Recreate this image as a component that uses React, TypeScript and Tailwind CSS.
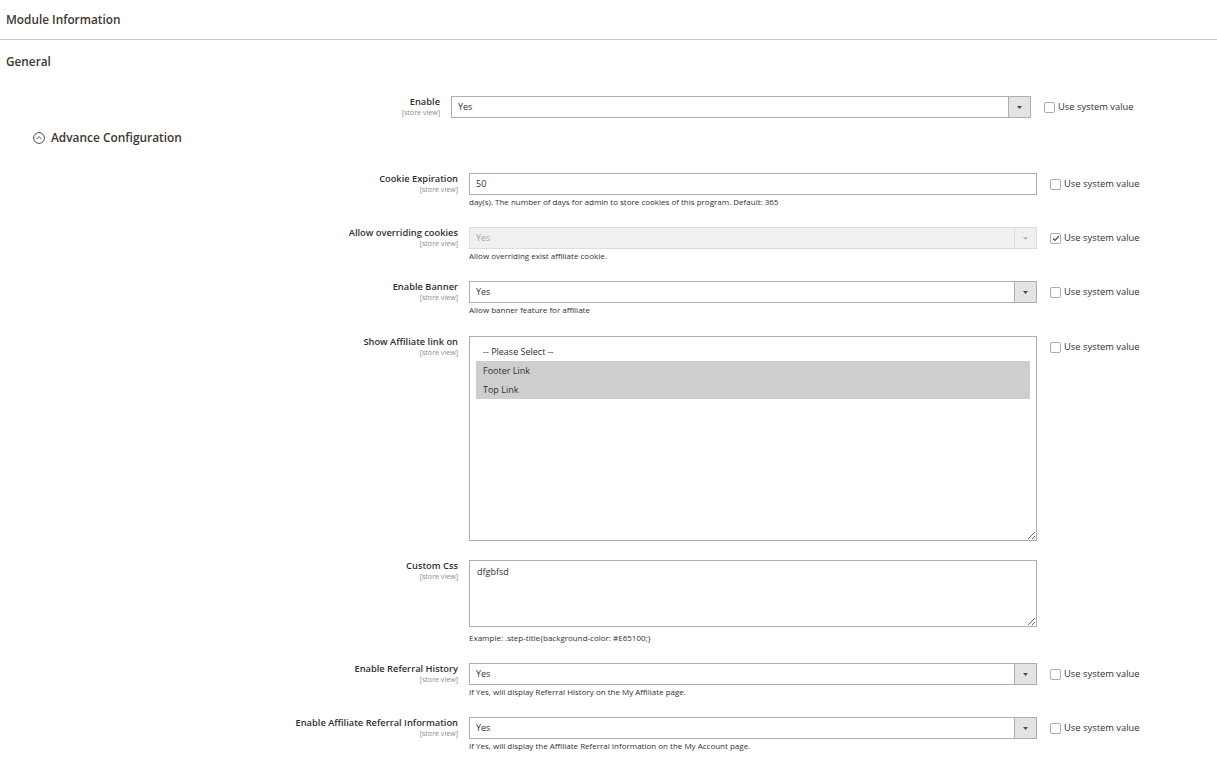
import React from "react";

const font = { fontFamily: '"Open Sans", "Liberation Sans", sans-serif' };

function Arrow({ disabled }: { disabled?: boolean }) {
  return (
    <div
      className={`flex w-[22px] shrink-0 items-center justify-center border-l ${
        disabled ? "border-[#dcdcdc] bg-[#f0f0f0]" : "border-[#adadad] bg-[#e3e3e3]"
      }`}
    >
      <svg width="5" height="3" viewBox="0 0 5 3">
        <path d="M0 0 L5 0 L2.5 3 Z" fill={disabled ? "#b5b5b5" : "#514943"} />
      </svg>
    </div>
  );
}

function Select({ value, disabled }: { value: string; disabled?: boolean }) {
  return (
    <div
      className={`flex h-[22px] w-full border ${
        disabled ? "border-[#dcdcdc] bg-[#f0f0f0] text-[#a6a6a6]" : "border-[#adadad] bg-white text-[#303030]"
      }`}
    >
      <div className="flex flex-1 items-center pl-[6px] text-[9px]">{value}</div>
      <Arrow disabled={disabled} />
    </div>
  );
}

function SystemValue({ checked }: { checked?: boolean }) {
  return (
    <div className="flex h-[22px] items-center gap-[3px] text-[9.4px] text-[#303030]">
      <div className="flex h-[11px] w-[11px] items-center justify-center rounded-[2px] border border-[#adadad] bg-white">
        {checked && (
          <svg width="8" height="7" viewBox="0 0 8 7">
            <path d="M1 3.5 L3 5.5 L7 1" stroke="#514943" strokeWidth="1.2" fill="none" />
          </svg>
        )}
      </div>
      <span>Use system value</span>
    </div>
  );
}

function Label({ text }: { text: string }) {
  return (
    <div className="pt-[1px] text-right leading-none">
      <div className="text-[9.3px] font-semibold leading-[10px] text-[#303030]">{text}</div>
      <div className="mt-[1px] text-[7.1px] leading-[8px] text-[#8a8a8a]">[store view]</div>
    </div>
  );
}

function Note({ text, className = "mt-[1px]" }: { text: string; className?: string }) {
  return <div className={`${className} text-[8px] leading-[12px] text-[#303030]`}>{text}</div>;
}

function Row({
  label,
  children,
  system,
  checked,
}: {
  label: string;
  children: React.ReactNode;
  system?: boolean;
  checked?: boolean;
}) {
  return (
    <div className="mb-[19px] flex">
      <div className="w-[458px] shrink-0">
        <Label text={label} />
      </div>
      <div className="ml-[11px] w-[568px] shrink-0">{children}</div>
      <div className="ml-[13px]">{system && <SystemValue checked={checked} />}</div>
    </div>
  );
}

export default function App() {
  return (
    <div className="min-h-screen w-[1217px] bg-white" style={font}>
      <div className="flex h-[40px] items-center border-b border-[#cccccc] pl-[6px] text-[11.8px] font-semibold text-[#41362f]">
        Module Information
      </div>
      <div className="pl-[6px] pt-[14px] text-[11.8px] font-semibold leading-[15px] text-[#41362f]">General</div>

      {/* Enable */}
      <div className="mt-[27px] flex">
        <div className="w-[440px] shrink-0">
          <Label text="Enable" />
        </div>
        <div className="ml-[11px] w-[580px] shrink-0">
          <Select value="Yes" />
        </div>
        <div className="ml-[13px]">
          <SystemValue />
        </div>
      </div>

      {/* Advance Configuration */}
      <div className="ml-[33px] mt-[12px] flex h-[16px] items-center gap-[6px] text-[11.9px] font-semibold text-[#41362f]">
        <svg width="12" height="12" viewBox="0 0 12 12">
          <circle cx="6" cy="6" r="5.4" stroke="#41362f" strokeWidth="0.9" fill="none" />
          <path d="M3.6 7 L6 4.6 L8.4 7" stroke="#41362f" strokeWidth="0.9" fill="none" />
        </svg>
        <span>Advance Configuration</span>
      </div>

      <div className="mt-[27px]">
        <Row label="Cookie Expiration" system>
          <div className="flex h-[22px] items-center border border-[#adadad] pl-[6px] text-[9px] text-[#303030]">50</div>
          <Note text="day(s). The number of days for admin to store cookies of this program. Default: 365" />
        </Row>

        <Row label="Allow overriding cookies" system checked>
          <Select value="Yes" disabled />
          <Note text="Allow overriding exist affiliate cookie." />
        </Row>

        <Row label="Enable Banner" system>
          <Select value="Yes" />
          <Note text="Allow banner feature for affiliate" />
        </Row>

        <div className="h-[1px]" />

        <Row label="Show Affiliate link on" system>
          <div className="h-[205px] resize-y overflow-auto border border-[#adadad] px-[6px] pt-[5px] text-[9px] text-[#303030]">
            <div className="flex h-[19px] items-center pl-[7px]">-- Please Select --</div>
            <div className="flex h-[19px] items-center bg-[#cecece] pl-[7px]">Footer Link</div>
            <div className="flex h-[19px] items-center bg-[#cecece] pl-[7px]">Top Link</div>
          </div>
        </Row>

        <Row label="Custom Css">
          <div className="h-[67px] resize-y overflow-auto border border-[#adadad] px-[7px] pt-[4px] text-[9px] text-[#303030]">
            dfgbfsd
          </div>
          <Note text="Example: .step-title{background-color: #E65100;}" className="mt-[5px]" />
        </Row>

        <Row label="Enable Referral History" system>
          <Select value="Yes" />
          <Note text="If Yes, will display Referral History on the My Affiliate page." />
        </Row>

        <Row label="Enable Affiliate Referral Information" system>
          <Select value="Yes" />
          <Note text="If Yes, will display the Affiliate Referral Information on the My Account page." />
        </Row>
      </div>
    </div>
  );
}
